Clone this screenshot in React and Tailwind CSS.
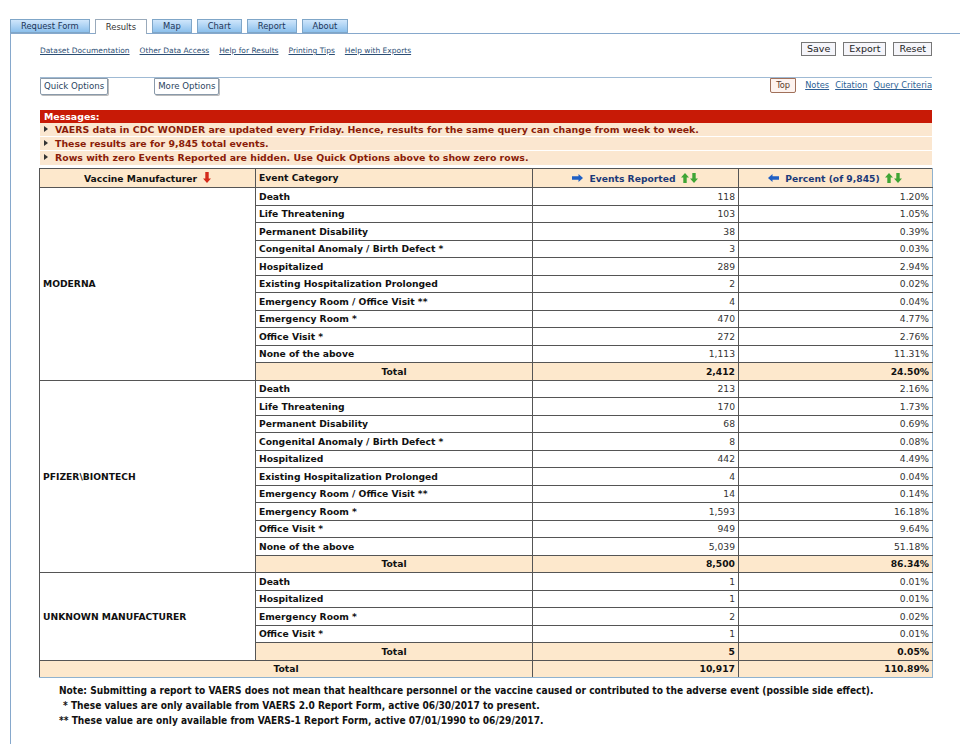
import React from 'react';

const verdana = { fontFamily: '"DejaVu Sans", Verdana, sans-serif' };

const groups = [
  {
    name: 'MODERNA',
    rows: [
      ['Death', '118', '1.20%'],
      ['Life Threatening', '103', '1.05%'],
      ['Permanent Disability', '38', '0.39%'],
      ['Congenital Anomaly / Birth Defect *', '3', '0.03%'],
      ['Hospitalized', '289', '2.94%'],
      ['Existing Hospitalization Prolonged', '2', '0.02%'],
      ['Emergency Room / Office Visit **', '4', '0.04%'],
      ['Emergency Room *', '470', '4.77%'],
      ['Office Visit *', '272', '2.76%'],
      ['None of the above', '1,113', '11.31%'],
    ],
    total: ['2,412', '24.50%'],
  },
  {
    name: 'PFIZER\\BIONTECH',
    rows: [
      ['Death', '213', '2.16%'],
      ['Life Threatening', '170', '1.73%'],
      ['Permanent Disability', '68', '0.69%'],
      ['Congenital Anomaly / Birth Defect *', '8', '0.08%'],
      ['Hospitalized', '442', '4.49%'],
      ['Existing Hospitalization Prolonged', '4', '0.04%'],
      ['Emergency Room / Office Visit **', '14', '0.14%'],
      ['Emergency Room *', '1,593', '16.18%'],
      ['Office Visit *', '949', '9.64%'],
      ['None of the above', '5,039', '51.18%'],
    ],
    total: ['8,500', '86.34%'],
  },
  {
    name: 'UNKNOWN MANUFACTURER',
    rows: [
      ['Death', '1', '0.01%'],
      ['Hospitalized', '1', '0.01%'],
      ['Emergency Room *', '2', '0.02%'],
      ['Office Visit *', '1', '0.01%'],
    ],
    total: ['5', '0.05%'],
  },
];

const tabs = ['Request Form', 'Results', 'Map', 'Chart', 'Report', 'About'];
const links = ['Dataset Documentation', 'Other Data Access', 'Help for Results', 'Printing Tips', 'Help with Exports'];

function SortArrows() {
  return (
    <svg width="18" height="10" viewBox="0 0 18 10" className="inline-block ml-[5px] align-[-1px]">
      <path d="M4 0 L8 4.5 L5.7 4.5 L5.7 10 L2.3 10 L2.3 4.5 L0 4.5 Z" fill="#3fa535" />
      <path d="M13 10 L17 5.5 L14.7 5.5 L14.7 0 L11.3 0 L11.3 5.5 L9 5.5 Z" fill="#3fa535" />
    </svg>
  );
}

function BlueArrow({ left }) {
  return (
    <svg width="11" height="8" viewBox="0 0 11 8" className="inline-block mr-[6px] align-[0px]">
      {left ? (
        <path d="M0 4 L4.5 0 L4.5 2.2 L11 2.2 L11 5.8 L4.5 5.8 L4.5 8 Z" fill="#1f5fc4" />
      ) : (
        <path d="M11 4 L6.5 0 L6.5 2.2 L0 2.2 L0 5.8 L6.5 5.8 L6.5 8 Z" fill="#1f5fc4" />
      )}
    </svg>
  );
}

function RedDown() {
  return (
    <svg width="8" height="11" viewBox="0 0 8 11" className="inline-block ml-[6px] align-[-1px]">
      <path d="M4 11 L8 6.5 L5.7 6.5 L5.7 0 L2.3 0 L2.3 6.5 L0 6.5 Z" fill="#d42a1a" />
    </svg>
  );
}

function Bullet() {
  return <span className="inline-block w-0 h-0 mr-[7px] border-y-[3px] border-y-transparent border-l-[4px] border-l-[#333] align-[1px]" />;
}

export default function App() {
  const cell = 'border border-[#555] px-[3px] h-[17.5px] leading-none';
  return (
    <div className="w-[960px] h-[744px] bg-white overflow-hidden relative" style={verdana}>
      {/* tabs */}
      <div className="flex items-end pt-[18px] pl-[10px] gap-[5px] h-[33px]">
        {tabs.map((t) => (
          <div
            key={t}
            className={
              t === 'Results'
                ? 'h-[15px] px-[10px] bg-white border border-b-0 border-[#9ab] text-[#333] text-[8.4px] flex items-center relative top-[1px]'
                : 'h-[14px] px-[10px] bg-gradient-to-b from-[#cfe6fb] to-[#8cc0ec] border border-[#7fa6c8] text-[#1c3458] text-[8.4px] flex items-center'
            }
          >
            {t}
          </div>
        ))}
      </div>
      <div className="ml-[10px] border-l border-t border-[#86a8cc] h-[720px] pl-[29px] pr-[28px]">
        <div className="flex justify-between items-start pt-[8px] h-[43px]">
          <div className="flex gap-[10px] text-[7.5px] text-[#2d4f75] pt-[3px]">
            {links.map((l) => (
              <span key={l} className="underline">{l}</span>
            ))}
          </div>
          <div className="flex gap-[7px] text-[9.5px] text-[#222]">
            <span className="border border-[#777] bg-[#f5f5fa] px-[5px] h-[14px] leading-[12px]">Save</span>
            <span className="border border-[#777] bg-[#f5f5fa] px-[5px] h-[14px] leading-[12px]">Export</span>
            <span className="border border-[#777] bg-[#f5f5fa] px-[5px] h-[14px] leading-[12px]">Reset</span>
          </div>
        </div>
        <div className="border-t border-[#9fbad4] flex justify-between items-start h-[33px]">
          <div className="flex gap-[46px] text-[8.6px] text-[#2a4460]">
            <span className="border border-[#8a9aaa] rounded-b-[2px] px-[3px] h-[17px] leading-[15px] shadow-[1px_1px_0_#bbb]">Quick Options</span>
            <span className="border border-[#8a9aaa] rounded-b-[2px] px-[3px] h-[17px] leading-[15px] shadow-[1px_1px_0_#bbb]">More Options</span>
          </div>
          <div className="flex items-center gap-[6px] text-[8.3px]">
            <span className="border border-[#a0705a] bg-[#fdf3ef] text-[#5a3a2a] px-[5px] h-[15px] leading-[13px] rounded-b-[2px] mr-[3px]">Top</span>
            <span className="underline text-[#2d5f95]">Notes</span>
            <span className="underline text-[#2d5f95]">Citation</span>
            <span className="underline text-[#2d5f95]">Query Criteria</span>
          </div>
        </div>
        {/* messages */}
        <div className="text-[9.4px] font-bold">
          <div className="bg-[#c81a06] text-white h-[13px] leading-[13px] px-[4px]">Messages:</div>
          <div className="bg-[#fbe7d0] text-[#8a1c08] h-[14px] leading-[14px] px-[4px] border-b border-white"><Bullet />VAERS data in CDC WONDER are updated every Friday. Hence, results for the same query can change from week to week.</div>
          <div className="bg-[#fbe7d0] text-[#8a1c08] h-[14px] leading-[14px] px-[4px] border-b border-white"><Bullet />These results are for 9,845 total events.</div>
          <div className="bg-[#fbe7d0] text-[#8a1c08] h-[14px] leading-[14px] px-[4px]"><Bullet />Rows with zero Events Reported are hidden. Use Quick Options above to show zero rows.</div>
        </div>
        <table className="border-collapse mt-[3px] w-[893px] -ml-px text-[9.2px] table-fixed">
          <colgroup>
            <col className="w-[216px]" />
            <col className="w-[277px]" />
            <col className="w-[206px]" />
            <col className="w-[194px]" />
          </colgroup>
          <thead>
            <tr className="bg-[#fde8cc] font-bold">
              <th className={cell + ' h-[19px] text-center text-[#111]'}>Vaccine Manufacturer<RedDown /></th>
              <th className={cell + ' h-[19px] text-left text-[#111]'}>Event Category</th>
              <th className={cell + ' h-[19px] text-center text-[#1c3a78]'}><BlueArrow />Events Reported<SortArrows /></th>
              <th className={cell + ' h-[19px] text-center text-[#1c3a78] border-r-[#8fb2cf]'}><BlueArrow left />Percent (of 9,845)<SortArrows /></th>
            </tr>
          </thead>
          <tbody>
            {groups.map((g) => (
              <React.Fragment key={g.name}>
                {g.rows.map((r, i) => (
                  <tr key={r[0]}>
                    {i === 0 && (
                      <td rowSpan={g.rows.length + 1} className={cell + ' font-bold text-[#111] align-middle'}>{g.name}</td>
                    )}
                    <td className={cell + ' font-bold text-[#111]'}>{r[0]}</td>
                    <td className={cell + ' text-right text-[#333]'}>{r[1]}</td>
                    <td className={cell + ' text-right text-[#333] border-r-[#8fb2cf]'}>{r[2]}</td>
                  </tr>
                ))}
                <tr className="bg-[#fde8cc] font-bold text-[#111]">
                  <td className={cell + ' text-center'}>Total</td>
                  <td className={cell + ' text-right'}>{g.total[0]}</td>
                  <td className={cell + ' text-right border-r-[#8fb2cf]'}>{g.total[1]}</td>
                </tr>
              </React.Fragment>
            ))}
            <tr className="bg-[#fde8cc] font-bold text-[#111]">
              <td colSpan={2} className={cell + ' text-center border-b-[#8fb2cf]'}>Total</td>
              <td className={cell + ' text-right border-b-[#8fb2cf]'}>10,917</td>
              <td className={cell + ' text-right border-r-[#8fb2cf] border-b-[#8fb2cf]'}>110.89%</td>
            </tr>
          </tbody>
        </table>
        <div className="mt-[5px] pl-[19px] text-[10.1px] font-bold text-[#111] leading-[15px]" style={{ fontFamily: '"DejaVu Sans Condensed", "Liberation Sans", sans-serif' }}>
          <div>Note: Submitting a report to VAERS does not mean that healthcare personnel or the vaccine caused or contributed to the adverse event (possible side effect).</div>
          <div className="pl-[4px]">* These values are only available from VAERS 2.0 Report Form, active 06/30/2017 to present.</div>
          <div>** These value are only available from VAERS-1 Report Form, active 07/01/1990 to 06/29/2017.</div>
        </div>
      </div>
    </div>
  );
}
